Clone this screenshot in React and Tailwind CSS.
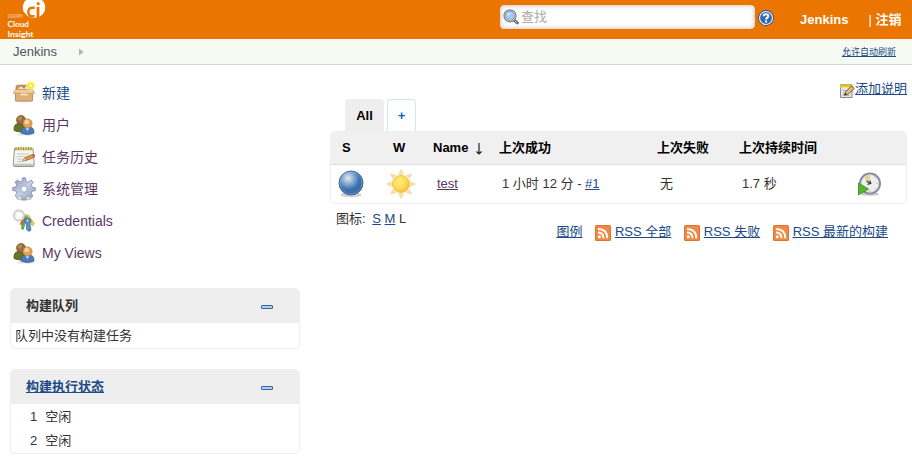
import React from "react";

function Logo() {
  return (
    <svg width="50" height="39" viewBox="0 0 50 39" className="ml-1 block shrink-0 overflow-hidden">
      <ellipse cx="30" cy="7.500" rx="11.200" ry="10.500" fill="#fff" />
      <path d="M17 12.500L21 13L25 19H17Z" fill="#ea7500" />
      <path d="M30.800 7.700H28.500Q24.300 7.700 24.300 12T28.500 16.300H30.500" fill="none" stroke="#ea7500" strokeWidth="2.400" />
      <path d="M34 7V18.500" stroke="#ea7500" strokeWidth="2.800" />
      <circle cx="34.200" cy="3.700" r="1.600" fill="#ea7500" />
      <text x="3.500" y="18" fontSize="4.500" textLength="15.500" fill="#f5b275" fontFamily="Open Sans, sans-serif">DIGRAPH</text>
      <text x="3.500" y="27.200" fontSize="8.200" fontWeight="700" textLength="21.500" lengthAdjust="spacingAndGlyphs" fill="#fff" fontFamily="Lato, Open Sans, sans-serif">Cloud</text>
      <text x="3.500" y="37.200" fontSize="8.200" fontWeight="700" textLength="26" lengthAdjust="spacingAndGlyphs" fill="#fff" fontFamily="Lato, Open Sans, sans-serif">Insight</text>
    </svg>
  );
}

function SearchIcon() {
  return (
    <svg width="16" height="16" viewBox="0 0 16 16">
      <path d="M11 11L14.300 13.800" stroke="#666" strokeWidth="3" strokeLinecap="round" />
      <path d="M11.500 11.500L14 13.700" stroke="#ccc" strokeWidth="1" />
      <circle cx="7" cy="6.800" r="6" fill="#eee" stroke="#858683" strokeWidth="1.300" />
      <circle cx="7" cy="6.800" r="4.500" fill="#a9c8f0" stroke="#7f9dce" />
      <path d="M4 6.500Q4.500 3.500 8 3.800Q7.500 6 4 6.500" fill="#e0edfb" />
    </svg>
  );
}

function HelpIcon() {
  return (
    <svg width="16" height="16" viewBox="0 0 16 16">
      <circle cx="8" cy="8" r="7.900" fill="#24508f" />
      <circle cx="8" cy="8" r="6.500" fill="#3667a8" stroke="#e8eef6" strokeWidth="1.200" />
      <path d="M5.700 6.200Q5.700 4.200 8 4.200T10.300 6Q10.300 7.200 9 7.900Q8.100 8.500 8.100 9.500" fill="none" stroke="#fff" strokeWidth="2" />
      <rect x="7.100" y="10.500" width="2" height="2" fill="#fff" />
    </svg>
  );
}

function BoxIcon() {
  return (
    <svg width="24" height="24" viewBox="0 0 24 24">
      <ellipse cx="12" cy="20" rx="10.500" ry="1.400" fill="#ddd" />
      <path d="M4 5L6 4H18L20 5V10H4Z" fill="#c99961" stroke="#a87840" strokeWidth=".6" />
      <path d="M6 8Q8 4.500 11 6.500Q15 3.500 18 8.500Z" fill="#eee4d0" />
      <path d="M10.500 5.500L12 8L13.500 5.500" fill="#a77c4a" />
      <path d="M3.500 9.500H20.500V19Q20.500 20 19.500 20H4.500Q3.500 20 3.500 19Z" fill="#dfb078" stroke="#b58346" strokeWidth=".8" />
      <path d="M3.500 8.500H20.500L22.800 12.300H1.200Z" fill="#f2cd9f" stroke="#c6935a" strokeWidth=".7" />
      <path d="M8.500 12.500H15.500V14.500H8.500Z" fill="#f2dfc0" />
      <circle cx="18.800" cy="4.600" r="4.600" fill="#fff78a" opacity=".75" />
      <circle cx="18.800" cy="4.600" r="3" fill="#f9e929" />
      <circle cx="18.800" cy="4.600" r="1.200" fill="#fff" />
    </svg>
  );
}

function UsersIcon() {
  return (
    <svg width="24" height="24" viewBox="0 0 24 24">
      <ellipse cx="14" cy="21.300" rx="9" ry="1.300" fill="#ddd" />
      <path d="M2 17.500Q1.200 10.500 7.500 10Q13.500 10.500 13.500 17Q8 20.500 2 17.500Z" fill="#64752a" stroke="#455617" strokeWidth=".7" />
      <circle cx="9" cy="7" r="4.500" fill="#976b3d" stroke="#74501f" strokeWidth=".7" />
      <circle cx="8" cy="5.500" r="2.300" fill="#b28856" />
      <path d="M9 20Q8.500 13.500 15.500 13.500Q22.500 13.500 22 20Q15.500 23 9 20Z" fill="#4a7cb9" stroke="#2b5993" strokeWidth=".7" />
      <path d="M13.500 14.500L15.500 18L17.500 14.500Z" fill="#e3ebf5" />
      <circle cx="15.500" cy="10.500" r="4.600" fill="#e1a35a" stroke="#b0742f" strokeWidth=".7" />
      <circle cx="14.700" cy="8.900" r="2.400" fill="#f6cf99" />
    </svg>
  );
}

function NotepadIcon({ size = 24 }) {
  return (
    <svg width={size} height={size} viewBox="0 0 24 24" className="shrink-0">
      <path d="M2.500 3.500H21L22.300 20Q22.300 21.500 21 21.500H2.300Q1 21.500 1.200 20Z" fill="#f4f4f2" stroke="#888a85" strokeWidth=".9" />
      <path d="M1.600 18.700H22V21H1.600Z" fill="#c6c7c4" />
      <path d="M3 2.500H20.500V5.500H3Z" fill="#ddd090" />
      <path d="M4 2V5M6.500 2V5M9 2V5M11.500 2V5M14 2V5M16.500 2V5M19 2V5" stroke="#a08d28" strokeWidth="1.100" />
      <path d="M5 9H17M5 11.500H13M5 14H11M5 16.500H10" stroke="#c8cac5" strokeWidth="1" />
      <path d="M10.500 16L13 12.500L21 9.300L23 11L21.500 12.800L14 15.500Z" fill="#e0974a" stroke="#8e5c2a" strokeWidth=".7" />
      <path d="M20 9.700L22 9L23.300 10.700L21.700 12.500Z" fill="#c65b4d" />
      <path d="M10.300 16.200L12.800 12.800L14 15.300Z" fill="#f0d9ac" stroke="#777" strokeWidth=".4" />
    </svg>
  );
}

function EditIcon() {
  return (
    <svg width="16" height="16" viewBox="0 0 16 16" className="shrink-0">
      <path d="M1.500 2.500H13V14.500H1.500Z" fill="#e6e7e4" stroke="#888a85" />
      <path d="M1 1H13.500V4.500H1Z" fill="#f0da49" />
      <path d="M2 1V3.500M4 1V3.500M6 1V3.500M8 1V3.500M10 1V3.500M12 1V3.500" stroke="#a68e20" strokeWidth=".8" />
      <path d="M3.500 7.500H9M3.500 10H7M3.500 12.500H10" stroke="#b1b2ae" />
      <path d="M5.500 12L7 8.500L12.500 3L15.300 5.500L9.300 11Z" fill="#e6c27a" stroke="#55451f" strokeWidth=".9" />
      <path d="M5.300 12.300L6.200 10L7.500 11.400Z" fill="#222" />
    </svg>
  );
}

function GearIcon() {
  return (
    <svg width="24" height="24" viewBox="0 0 24 24">
      <defs>
        <linearGradient id="gear" x1="0" y1="0" x2="1" y2="1">
          <stop offset="0" stopColor="#8793b9" />
          <stop offset=".5" stopColor="#c9cfe3" />
          <stop offset="1" stopColor="#8a97bd" />
        </linearGradient>
      </defs>
      <ellipse cx="12" cy="22" rx="8" ry="1.500" fill="#ccc" />
      <path fillRule="evenodd" d="M10.500 .8H13.500L14.200 4.500L16 5.300L19 3L21.300 5.300L19.200 8.200L20 10.200L23.300 10.800V13.700L19.900 14.300L19.100 16.200L21 18.900L18.700 21.100L16 19.100L14.200 19.900L13.600 23H10.400L9.700 19.800L7.700 19L5.100 20.900L2.900 18.700L4.800 16L4 14L.7 13.500V10.500L4 9.800L4.900 7.900L3 5.200L5.300 3L8 4.900L9.800 4.200ZM12 8.800A3.200 3.200 0 1 0 12 15.200A3.200 3.200 0 1 0 12 8.800Z" fill="url(#gear)" stroke="#7784a7" strokeWidth=".7" />
    </svg>
  );
}

function KeysIcon() {
  return (
    <svg width="24" height="24" viewBox="0 0 24 24">
      <path d="M12 6.500Q17 4 18.500 9L22.500 14.500L20.500 17L16 12Z" fill="#e6ce55" stroke="#bfa33b" strokeWidth=".6" />
      <path d="M11 7Q16 5.500 17 9.500L14 11L10 9Z" fill="#72b957" />
      <path d="M10 10L14 8.500L13 13L9 17L8.500 15L7.500 16Z" fill="#de5547" />
      <path d="M11 12L14 13L11.500 21L9 20L9.500 17Z" fill="#52b044" />
      <path d="M13 10Q18 8 19 11.500Q19 14 17.800 14.500L19 21L17 22.500L14.500 20.500L14.500 15Q12 14 13 10Z" fill="#5d8fc7" stroke="#37699f" strokeWidth=".7" />
      <circle cx="7" cy="6.500" r="4.900" fill="none" stroke="#aaa" strokeWidth="2" />
      <circle cx="7" cy="6.500" r="4.900" fill="none" stroke="#e8e8e8" strokeWidth="1.100" />
      <circle cx="15.500" cy="11.500" r=".9" fill="#dfeaf7" />
    </svg>
  );
}

function BallIcon() {
  return (
    <svg width="28" height="30" viewBox="0 0 28 30">
      <defs>
        <radialGradient id="ball" cx=".38" cy=".3" r=".72">
          <stop offset="0" stopColor="#e6eee2" />
          <stop offset=".3" stopColor="#93b4d8" />
          <stop offset=".65" stopColor="#3f71b0" />
          <stop offset="1" stopColor="#3567a6" />
        </radialGradient>
      </defs>
      <ellipse cx="14" cy="25.800" rx="10.500" ry="2.500" fill="#bbb" opacity=".7" />
      <circle cx="14" cy="14" r="12" fill="url(#ball)" stroke="#365f98" strokeWidth=".9" />
      <circle cx="14" cy="14" r="11" fill="none" stroke="#9ebddd" opacity=".45" />
    </svg>
  );
}

function SunIcon() {
  return (
    <svg width="30" height="30" viewBox="0 0 30 30">
      <defs>
        <radialGradient id="sun" cx=".4" cy=".35" r=".7">
          <stop offset="0" stopColor="#ffec80" />
          <stop offset=".6" stopColor="#fcda50" />
          <stop offset="1" stopColor="#f0bb38" />
        </radialGradient>
      </defs>
      {[0, 45, 90, 135, 180, 225, 270, 315].map((angle) => (
        <path key={angle} d="M12.700 5.200L15 .5L17.300 5.200Z" fill="#fbdf9d" stroke="#f3cc83" strokeWidth=".5" transform={`rotate(${angle} 15 15)`} />
      ))}
      <circle cx="15" cy="15" r="8.500" fill="url(#sun)" stroke="#efb64d" strokeWidth=".9" />
    </svg>
  );
}

function BuildIcon() {
  return (
    <svg width="26" height="26" viewBox="0 0 26 26">
      <ellipse cx="14" cy="23" rx="9" ry="1.700" fill="#ccc" />
      <circle cx="14" cy="12.500" r="10" fill="#eeeeec" stroke="#8a8a9e" strokeWidth="2" />
      <circle cx="14" cy="12.500" r="8.800" fill="none" stroke="#c9c9d2" strokeWidth=".8" />
      <path d="M13 12L8.500 7Q10.500 4 14 4.500Z" fill="#e6cf80" />
      <path d="M10.500 10L14 12.500L11.500 13.500M13.800 9.500L15 13" fill="none" stroke="#333" strokeWidth="1.100" />
      <path d="M18.500 7L19.500 6M20 12.500H21.500M18.500 17.500L19.500 18.500M14 19V20.500" stroke="#bbb" />
      <path d="M2.500 12L12.500 18L2.500 24Z" fill="#57b527" stroke="#388c16" strokeWidth=".8" />
    </svg>
  );
}

function RssIcon() {
  return (
    <svg width="16" height="16" viewBox="0 0 16 16" className="relative top-px shrink-0">
      <rect width="16" height="16" rx="1.500" fill="#e2732f" />
      <rect x="1" y="1" width="14" height="14" rx="1" fill="#ee8a45" />
      <circle cx="4.300" cy="11.800" r="1.500" fill="#fff" />
      <path d="M3 7.500Q8.500 7.500 8.500 13.200M3 4Q12.200 4 12.200 13.200" fill="none" stroke="#fff" strokeWidth="2" />
    </svg>
  );
}

const tasks = [
  { label: "新建", icon: <BoxIcon />, color: "text-[#204a87]" },
  { label: "用户", icon: <UsersIcon />, color: "text-[#5c3566]" },
  { label: "任务历史", icon: <NotepadIcon />, color: "text-[#5c3566]" },
  { label: "系统管理", icon: <GearIcon />, color: "text-[#5c3566]" },
  { label: "Credentials", icon: <KeysIcon />, color: "text-[#5c3566]" },
  { label: "My Views", icon: <UsersIcon />, color: "text-[#5c3566]" },
];

function Pane({ title, children }) {
  return (
    <section className="w-[290px] overflow-hidden rounded-[5px] border border-[#eee]">
      <div className="flex h-[34px] items-center justify-between bg-[#eee] pr-[26px] pl-[15px] font-bold">
        {title}
        <span className="mt-px h-1 w-3 rounded-[1px] border border-[#3465a4] bg-[#b1cdec]" />
      </div>
      {children}
    </section>
  );
}

function RssLink({ children }) {
  return (
    <span className="flex items-center gap-1">
      <RssIcon />
      <a className="text-[#204a87] underline">{children}</a>
    </span>
  );
}

const columns = "grid grid-cols-[47px_47px_66px_158px_82px_118px_1fr] items-center";

export default function App() {
  return (
    <div className="h-[468px] w-[912px] overflow-hidden bg-white font-['Liberation_Sans','Noto_Sans_CJK_SC',sans-serif] text-[13px] leading-4 text-[#333]">
      <header className="flex h-[39px] bg-[#ea7500] font-bold text-white">
        <Logo />
        <div className="mt-[5px] ml-[446px] flex h-6 w-[255px] items-center gap-[2px] rounded-[4px] border border-[#ddd] bg-white pl-[2px] font-normal text-[#aaa] shadow-[inset_0_0_4px_#ccc]">
          <SearchIcon />
          <span>查找</span>
        </div>
        <div className="mt-[10px] ml-[3px]"><HelpIcon /></div>
        <span className="mt-3 ml-[26px]">Jenkins</span>
        <span className="mt-3 ml-5 whitespace-nowrap"><span className="font-normal">|</span> 注销</span>
      </header>
      <nav className="flex h-[26px] items-center border-b border-[#d3d7cf] bg-[#f6faf2] pr-4 pl-[13px] text-[#4d545d]">
        <span>Jenkins</span>
        <svg width="5" height="8" viewBox="0 0 5 8" className="mt-px ml-[22px]"><path d="M0 .5L4.500 4L0 7.500Z" fill="#b2b2b2" /></svg>
        <a className="ml-auto text-[9px] text-[#204a87] underline">允许自动刷新</a>
      </nav>

      <div className="flex">
        <aside className="w-[300px] pt-3 pl-[10px]">
          <ul className="mb-[19px] text-sm">
            {tasks.map((task) => (
              <li key={task.label} className="flex h-8 items-center gap-[6px] pl-[2px]">
                {task.icon}
                <a className={task.color}>{task.label}</a>
              </li>
            ))}
          </ul>
          <Pane title={<span>构建队列</span>}>
            <div className="h-[25px] pt-[5px] pl-1">队列中没有构建任务</div>
          </Pane>
          <div className="h-5" />
          <Pane title={<a className="text-[#204a87] underline">构建执行状态</a>}>
            <div className="flex h-[25px] items-center gap-2 pl-[19px]"><span>1</span><span>空闲</span></div>
            <div className="flex h-6 items-center gap-2 pl-[19px]"><span>2</span><span>空闲</span></div>
          </Pane>
        </aside>

        <main className="ml-[30px] w-[577px]">
          <div className="flex h-[34px] items-end justify-end pt-4">
            <EditIcon />
            <a className="mb-[2px] text-[#204a87] underline">添加说明</a>
          </div>
          <div className="flex h-8 gap-[3px] pl-[15px] font-bold">
            <span className="w-[39px] rounded-t-[4px] bg-[#eee] pt-[9px] text-center text-black">All</span>
            <span className="w-[29px] rounded-t-[4px] border border-b-0 border-[#cce8ff] pt-2 text-center text-[#0563cf]">+</span>
          </div>
          <div className="h-[73px] overflow-hidden rounded-[5px] border border-[#eee]">
            <div className={`${columns} h-[33px] border-b border-[#ddd] bg-[#f0f0f0] font-bold text-black`}>
              <span className="pl-[11px]">S</span>
              <span className="pl-[15px]">W</span>
              <span className="flex pl-2">
                Name
                <svg width="8" height="12" viewBox="0 0 8 12" className="mt-[3px] ml-[7px] shrink-0">
                  <path d="M4 0V11M1.500 8.500L4 11L6.500 8.500" fill="none" stroke="#222" strokeWidth="1.200" />
                </svg>
              </span>
              <span className="pl-2">上次成功</span>
              <span className="pl-2">上次失败</span>
              <span className="pl-2">上次持续时间</span>
            </div>
            <div className={`${columns} h-[38px]`}>
              <span className="pl-[6px]"><BallIcon /></span>
              <span className="pl-2"><SunIcon /></span>
              <a className="pl-3 text-[#5c3566] underline">test</a>
              <span className="pl-[11px]">1 小时 12 分 - <a className="text-[#204a87] underline">#1</a></span>
              <span className="pl-[11px]">无</span>
              <span className="pl-[11px]">1.7 秒</span>
              <span className="pl-[7px]"><BuildIcon /></span>
            </div>
          </div>
          <div className="mt-[7px] h-4 pl-[6px]">
            图标: <a className="ml-[3px] text-[#204a87] underline">S</a> <a className="text-[#204a87] underline">M</a> L
          </div>
          <div className="mt-[-3px] flex h-4 items-center justify-end gap-[12.500px] pr-[19px] whitespace-nowrap">
            <a className="text-[#204a87] underline">图例</a>
            <RssLink>RSS 全部</RssLink>
            <RssLink>RSS 失败</RssLink>
            <RssLink>RSS 最新的构建</RssLink>
          </div>
        </main>
      </div>
    </div>
  );
}
